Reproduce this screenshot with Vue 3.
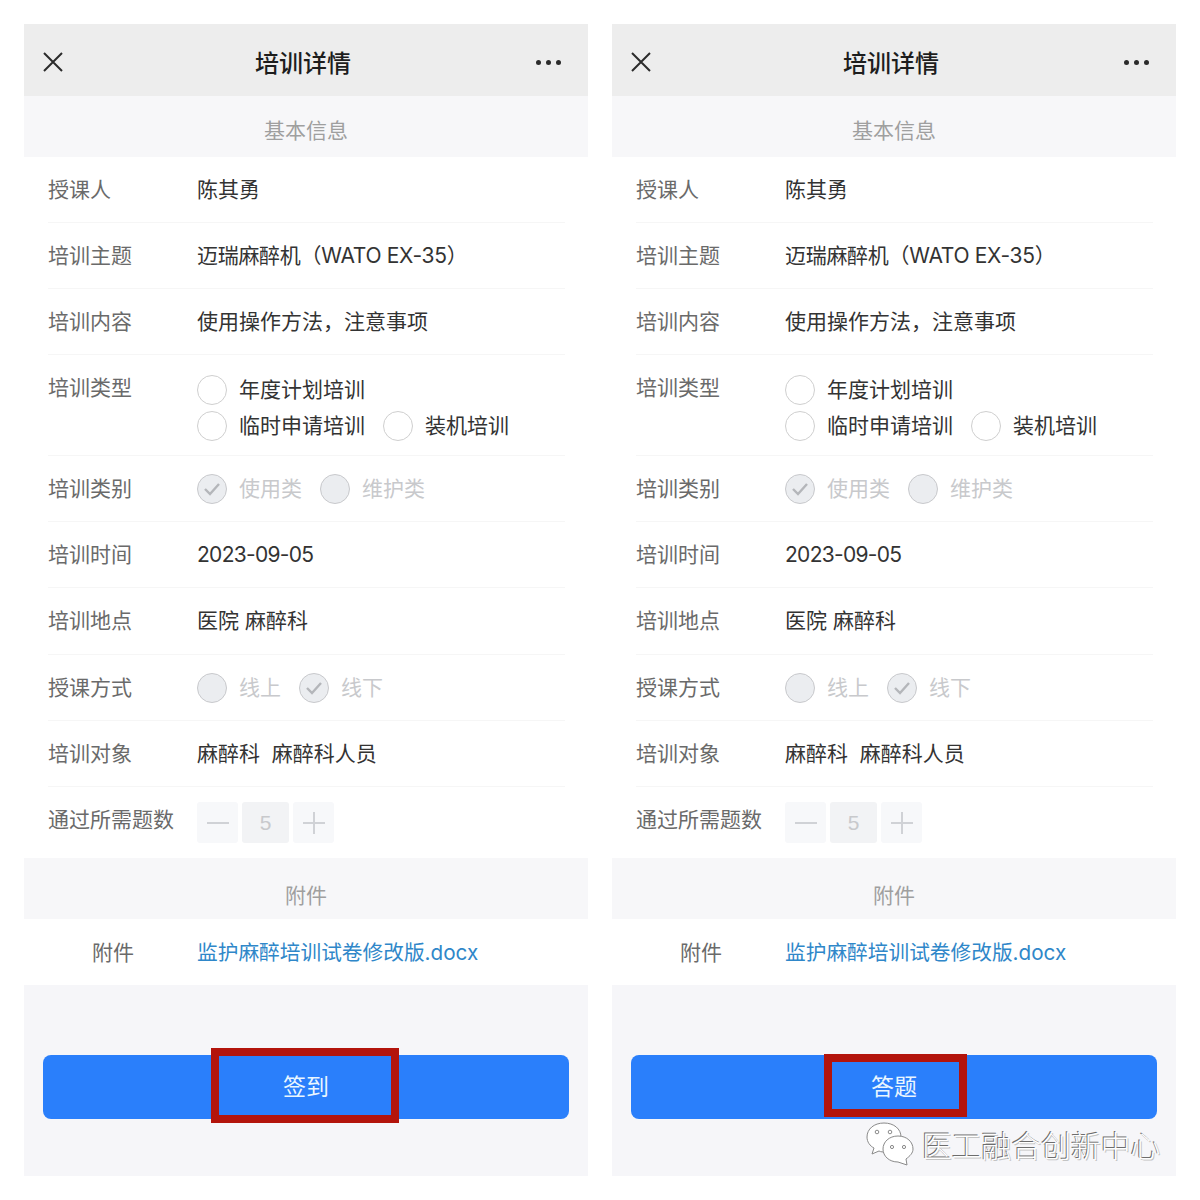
<script setup>
const panels = [
  { id: 'sign', action: '签到', mark: 'mark-sign' },
  { id: 'exam', action: '答题', mark: 'mark-exam' }
]

const rows = [
  { label: '授课人', type: 'text', value: '陈其勇' },
  { label: '培训主题', type: 'text', value: '迈瑞麻醉机（WATO EX-35）', fit: 'fit-mixed' },
  { label: '培训内容', type: 'text', value: '使用操作方法，注意事项' },
  { label: '培训类型', type: 'choice', lines: [
    [{ text: '年度计划培训' }],
    [{ text: '临时申请培训' }, { text: '装机培训' }]
  ] },
  { label: '培训类别', type: 'locked', options: [
    { text: '使用类', checked: true },
    { text: '维护类', checked: false }
  ] },
  { label: '培训时间', type: 'text', value: '2023-09-05', fit: 'fit-date' },
  { label: '培训地点', type: 'text', value: '医院 麻醉科', tall: true },
  { label: '授课方式', type: 'locked', options: [
    { text: '线上', checked: false },
    { text: '线下', checked: true }
  ] },
  { label: '培训对象', type: 'text', value: '麻醉科  麻醉科人员' },
  { label: '通过所需题数', type: 'stepper', value: 5 }
]
</script>

<template>
  <div class="page">
    <div v-for="panel in panels" :key="panel.id" class="panel">
      <div class="topbar">
        <svg class="close" width="22" height="22" viewBox="0 0 22 22">
          <path d="M2 2 L20 20 M20 2 L2 20" stroke="#2b2b2b" stroke-width="2" fill="none" />
        </svg>
        <span class="title">培训详情</span>
        <span class="dots"><i></i><i></i><i></i></span>
      </div>

      <div class="section">基本信息</div>

      <div class="form">
        <div
          v-for="(row, i) in rows"
          :key="row.label"
          class="row"
          :class="['row-' + row.type, { last: i === rows.length - 1, tall: row.tall }]"
        >
          <div class="label">{{ row.label }}</div>

          <div v-if="row.type === 'text'" class="value" :class="row.fit">{{ row.value }}</div>

          <div v-else-if="row.type === 'choice'" class="choice">
            <div v-for="(line, n) in row.lines" :key="n" class="choice-line">
              <div v-for="opt in line" :key="opt.text" class="option">
                <span class="radio"></span>
                <span class="value">{{ opt.text }}</span>
              </div>
            </div>
          </div>

          <div v-else-if="row.type === 'locked'" class="choice-line">
            <div v-for="opt in row.options" :key="opt.text" class="option">
              <span class="radio radio-locked">
                <svg v-if="opt.checked" width="20" height="16" viewBox="0 0 20 16">
                  <path d="M3 8 L8 13 L17 3" stroke="#b4b6ba" stroke-width="2.4" fill="none" />
                </svg>
              </span>
              <span class="value value-locked">{{ opt.text }}</span>
            </div>
          </div>

          <div v-else class="stepper">
            <span class="step-btn">
              <svg width="22" height="22" viewBox="0 0 22 22"><path d="M0 11 H22" stroke="#d0d2d6" stroke-width="2" /></svg>
            </span>
            <span class="step-num">{{ row.value }}</span>
            <span class="step-btn">
              <svg width="22" height="22" viewBox="0 0 22 22"><path d="M0 11 H22 M11 0 V22" stroke="#d0d2d6" stroke-width="2" /></svg>
            </span>
          </div>
        </div>
      </div>

      <div class="section section-files">附件</div>

      <div class="file-row">
        <div class="file-label">附件</div>
        <div class="file-link">监护麻醉培训试卷修改版.docx</div>
      </div>

      <div class="footer">
        <div class="action">
          {{ panel.action }}
          <span class="mark" :class="panel.mark"></span>
        </div>
      </div>
    </div>

    <div class="watermark">
      <svg width="48" height="44" viewBox="0 0 48 44">
        <path d="M18 1 C8 1 1 7 1 15 C1 20 4 24 8 26 L6 32 L13 29 C15 30 17 30 19 30 C27 30 35 24 35 15 C35 7 28 1 18 1 Z" fill="#fff" stroke="#8a8a8a" stroke-width="1" />
        <path d="M32 14 C23 14 17 20 17 27 C17 34 23 40 32 40 L41 43 L40 37 C44 34 47 31 47 27 C47 20 41 14 32 14 Z" fill="#fff" stroke="#8a8a8a" stroke-width="1" />
        <circle cx="11" cy="10" r="1.8" fill="none" stroke="#8a8a8a" />
        <circle cx="24" cy="10" r="1.8" fill="none" stroke="#8a8a8a" />
        <circle cx="26" cy="25" r="1.6" fill="none" stroke="#8a8a8a" />
        <circle cx="38" cy="25" r="1.6" fill="none" stroke="#8a8a8a" />
      </svg>
      <span class="watermark-text">医工融合创新中心</span>
    </div>
  </div>
</template>

<style scoped>
.page {
  position: relative;
  display: flex;
  gap: 24px;
  width: 1200px;
  height: 1200px;
  padding: 24px;
  box-sizing: border-box;
  background: #fff;
  font-family: Inter, "Noto Sans CJK SC", "Noto Sans", sans-serif;
}
.panel {
  display: flex;
  flex-direction: column;
  width: 564px;
  height: 1152px;
  background: #f6f6f9;
}
.topbar {
  position: relative;
  display: flex;
  align-items: center;
  justify-content: space-between;
  height: 72px;
  padding: 4px 27px 0 18px;
  box-sizing: border-box;
  background: #ededed;
}
.title {
  position: absolute;
  left: 231px;
  top: 22px;
  font-size: 24px;
  line-height: 36px;
  font-weight: 500;
  color: #1d1d1d;
}
.dots {
  display: flex;
  gap: 5px;
}
.dots i {
  width: 5px;
  height: 5px;
  border-radius: 50%;
  background: #2b2b2b;
}
.section {
  height: 61px;
  line-height: 70px;
  text-align: center;
  font-size: 21px;
  color: #9f9f9f;
  background: #f7f7f9;
  box-sizing: border-box;
}
.section-files {
  line-height: 76px;
}
.form {
  background: #fff;
}
.row {
  display: flex;
  align-items: center;
  height: 66px;
  margin: 0 23px 0 24px;
  border-bottom: 1px solid #f6f6f6;
  box-sizing: border-box;
}
.row.tall {
  height: 67px;
}
.row.last {
  height: 71px;
  padding-bottom: 5px;
  border-bottom: none;
}
.row-choice {
  align-items: flex-start;
  height: 101px;
  padding-top: 17px;
}
.label {
  width: 149px;
  flex: none;
  font-size: 21px;
  line-height: 32px;
  color: #6a6a6a;
  white-space: nowrap;
}
.value {
  font-size: 21px;
  line-height: 32px;
  color: #333;
  white-space: pre;
}
.fit-date {
  letter-spacing: -0.7px;
}
.fit-mixed {
  letter-spacing: -0.3px;
}
.value-locked {
  color: #c8c9cc;
}
.choice-line {
  display: flex;
  gap: 18px;
  height: 36px;
  align-items: center;
}
.option {
  display: flex;
  align-items: center;
  gap: 12px;
}
.radio {
  display: flex;
  align-items: center;
  justify-content: center;
  width: 30px;
  height: 30px;
  flex: none;
  border: 1px solid #cfcfcf;
  border-radius: 50%;
  box-sizing: border-box;
  background: #fff;
}
.radio-locked {
  background: #ebedf0;
  border-color: #c8c9cc;
}
.stepper {
  display: flex;
  gap: 4px;
  margin-top: 5px;
}
.step-btn,
.step-num {
  display: flex;
  align-items: center;
  justify-content: center;
  height: 41px;
  border-radius: 3px;
}
.step-btn {
  width: 41px;
  background: #f7f8fa;
}
.step-num {
  width: 47px;
  background: #f2f3f5;
  color: #c8c9cc;
  font-size: 21px;
  font-family: "Liberation Sans", sans-serif;
}
.file-row {
  display: flex;
  align-items: center;
  height: 66px;
  padding-bottom: 2px;
  box-sizing: border-box;
  background: #fff;
}
.file-label {
  width: 173px;
  padding-left: 68px;
  box-sizing: border-box;
  font-size: 21px;
  color: #6a6a6a;
}
.file-link {
  font-size: 20.7px;
  color: #2f87c9;
}
.footer {
  flex: 1;
  padding: 70px 19px 0;
}
.action {
  position: relative;
  height: 64px;
  line-height: 64px;
  width: 526px;
  text-align: center;
  border-radius: 8px;
  background: #2a7ffb;
  color: #e9f6ff;
  font-size: 23px;
}
.mark {
  position: absolute;
  border: 8px solid #b3140c;
  box-sizing: border-box;
}
.mark-sign {
  left: 168px;
  top: -7px;
  width: 188px;
  height: 75px;
}
.mark-exam {
  left: 193px;
  top: -1px;
  width: 143px;
  height: 63px;
}
.watermark {
  position: absolute;
  left: 866px;
  top: 1122px;
  display: flex;
  align-items: flex-start;
  gap: 8px;
}
.watermark-text {
  padding-top: 2px;
  font-size: 29.8px;
  line-height: 44px;
  color: #fff;
  white-space: nowrap;
  text-shadow: -1px -1px 0 #6d6d6d, 1px 1px 0 #c4c4c4;
  font-weight: 300;
}
</style>
